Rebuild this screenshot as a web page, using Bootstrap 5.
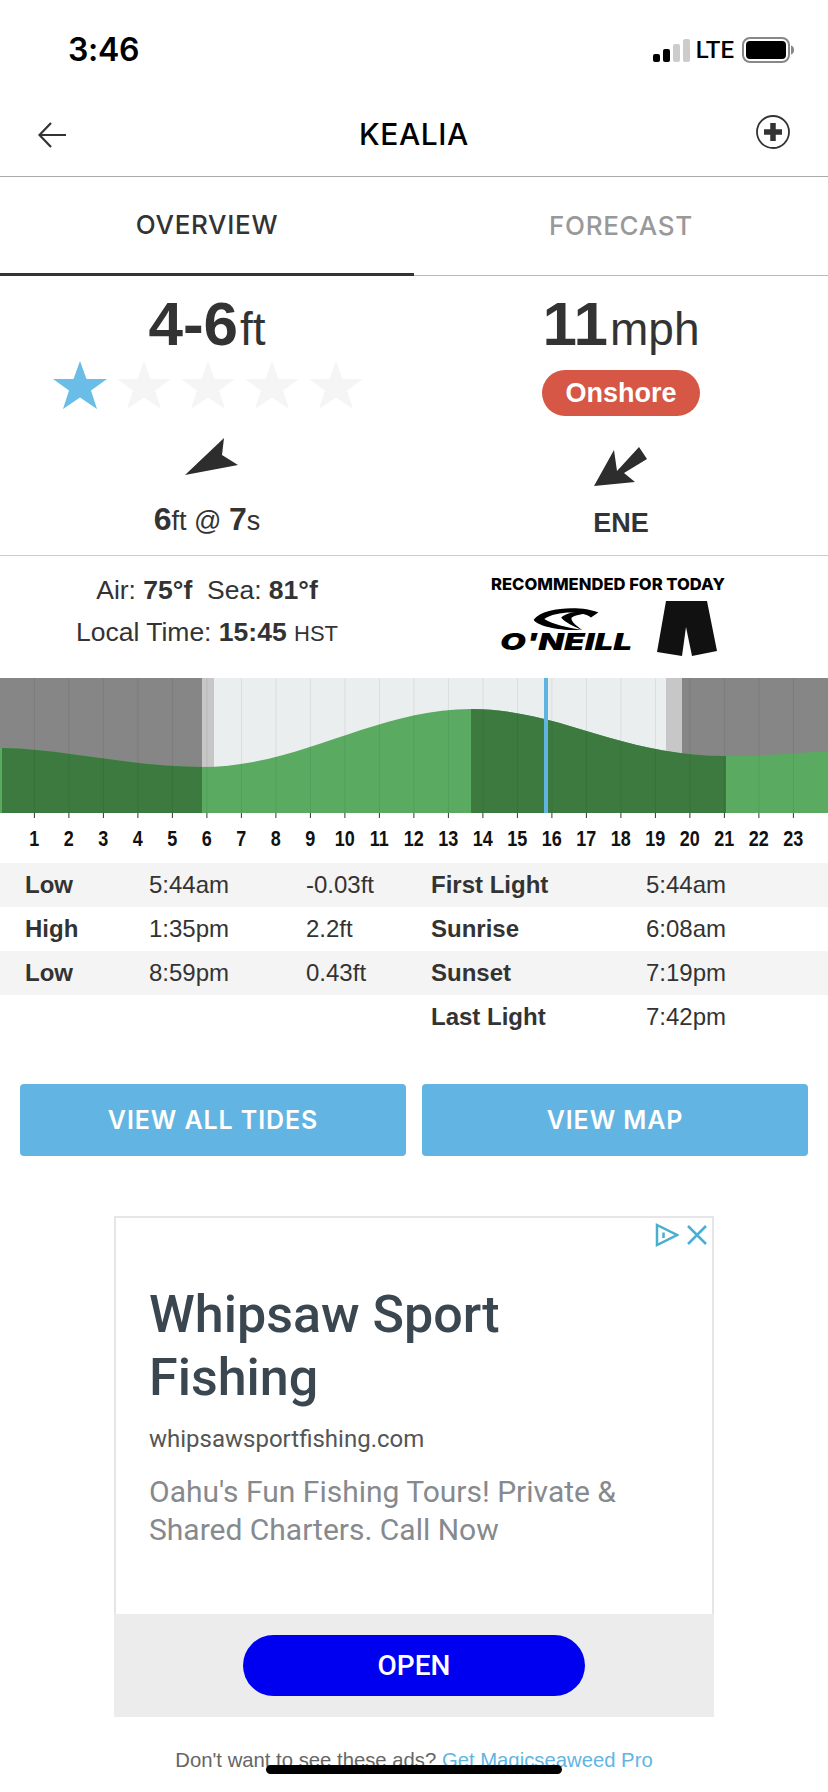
<!DOCTYPE html>
<html lang="en">
<head>
    <meta charset="UTF-8">
    <meta name="viewport" content="width=device-width, initial-scale=1.0">
    <title>Kealia</title>
    <link href="https://cdn.jsdelivr.net/npm/bootstrap@5.3.0/dist/css/bootstrap.min.css" rel="stylesheet">
    <style>
        body {
            margin: 0;
            background: #fff;
            color: #333;
            font-family: "Liberation Sans", Arial, sans-serif;
        }

        .phone {
            position: relative;
            width: 828px;
            height: 1792px;
            overflow: hidden;
        }

        .status-row {
            height: 98px;
            padding: 2px 34px 0 68px;
        }

        .clock {
            font: 600 32px/1 Inter, sans-serif;
            color: #000;
            letter-spacing: -.3px;
        }

        .lte {
            font: 500 24px/1 "Roboto", sans-serif;
            color: #000;
            margin: 0 8px 0 6px;
        }

        .top-nav {
            height: 79px;
            border-bottom: 1px solid #aaa;
            padding: 0 38px 6px;
        }

        .top-nav h1 {
            font: 500 30px/1 Inter, sans-serif;
            letter-spacing: .6px;
            color: #000;
            margin: 0;
        }

        .back-arrow {
            margin: 2px 6px 0 0;
        }

        .view-tabs {
            height: 99px;
            border-bottom: 1px solid #bbb;
        }

        .view-tab {
            width: 50%;
            font: 500 26px/1 Inter, sans-serif;
            letter-spacing: .7px;
            color: #333;
            text-decoration: none;
        }

        .view-tab.on {
            border-bottom: 3px solid #333;
            margin-bottom: -1px;
        }

        .view-tab.off {
            color: #999;
        }

        .summary {
            height: 280px;
            border-bottom: 1px solid #ccc;
        }

        .big-num {
            font-size: 62px;
            font-weight: 700;
            line-height: 60px;
            margin-top: 18px;
            white-space: nowrap;
        }

        .big-num span {
            font-size: 46px;
            font-weight: 400;
            margin-left: 2px;
        }

        .star-row {
            margin-top: 2px;
            padding-left: 53px;
            gap: 10px;
        }

        .pill-onshore {
            width: 158px;
            height: 46px;
            margin-top: 11px;
            border-radius: 23px;
            background: #d65745;
            color: #fff;
            font-size: 27px;
            font-weight: 700;
            line-height: 46px;
        }

        .swell-arrow {
            margin-top: 29px;
        }

        .wind-arrow {
            margin-top: 30px;
        }

        .swell {
            font-size: 27px;
            line-height: 36px;
            margin-top: 26px;
        }

        .swell b {
            font-size: 32px;
        }

        .wind-dir {
            font-size: 27px;
            font-weight: 700;
            line-height: 30px;
            margin-top: 22px;
        }

        .conditions {
            height: 122px;
        }

        .temps {
            font-size: 26.500px;
            line-height: 42px;
            padding-top: 13px;
        }

        .temps small {
            font-size: 22px;
        }

        .rec-wrap {
            padding: 19px 26px 0 0;
        }

        .rec-title {
            font: 800 16.600px/18px Inter, sans-serif;
            color: #000;
            white-space: nowrap;
        }

        .rec-row {
            margin-top: 8px;
            gap: 25px;
        }

        .brand-block {
            width: 132px;
            padding-top: 7px;
        }

        .brand-word {
            display: block;
            width: 93px;
            margin-top: 3px;
            font: italic 900 23.500px/18px Inter, sans-serif;
            color: #000;
            white-space: nowrap;
            transform: scaleX(1.42);
            transform-origin: left center;
        }

        .tide-chart {
            display: block;
        }

        .hour-labels {
            height: 45px;
            padding-left: 17px;
            color: #111;
            font-size: 18px;
            font-weight: 700;
            line-height: 43px;
        }

        .hour-labels span {
            width: 34.5px;
            text-align: center;
            transform: scaleY(1.2);
        }

        .tide-table {
            --bs-table-striped-bg: #f4f4f4;
            --bs-table-striped-color: #333;
            --bs-table-color: #333;
            font-size: 24px;
            line-height: 44px;
            table-layout: fixed;
            margin-bottom: 45px;
        }

        .tide-table td {
            padding: 0;
            height: 44px;
            color: #333;
        }

        .tide-table td:first-child {
            padding-left: 25px;
        }

        .btn-pair {
            padding: 0 20px;
        }

        .tide-btn {
            width: 386px;
            height: 72px;
            border: 0;
            border-radius: 4px;
            background: #62b5e3;
            color: #fff;
            font: 600 25px/72px Inter, sans-serif;
            letter-spacing: .9px;
            padding: 0;
        }

        .ad-box {
            position: relative;
            width: 600px;
            height: 501px;
            margin: 60px auto 0;
            border: 2px solid #e6e6e6;
            font-family: Roboto, sans-serif;
        }

        .ad-choice {
            position: absolute;
            top: 5px;
            right: 5px;
        }

        .ad-body {
            height: 396px;
            padding: 65px 30px 0 33px;
        }

        .ad-body h2 {
            font: 500 52px/63px Roboto, sans-serif;
            color: #3a4750;
            margin: 0;
            max-width: 420px;
        }

        .ad-url {
            font-size: 24px;
            line-height: 30px;
            color: #555;
            margin-top: 15px;
        }

        .ad-desc {
            font-size: 30px;
            line-height: 38px;
            color: #868a8e;
            margin-top: 19px;
        }

        .ad-foot {
            height: 103px;
            background: #ececec;
            margin: 0 -2px -2px;
        }

        .ad-open {
            width: 342px;
            height: 61px;
            border: 0;
            border-radius: 31px;
            background: #0000f0;
            color: #fff;
            font: 500 28px/61px Roboto, sans-serif;
            padding: 0;
        }

        .ad-note {
            font-size: 20.300px;
            line-height: 26px;
            color: #666;
            margin-top: 30px;
        }

        .ad-note a {
            color: #62b5e3;
            text-decoration: none;
        }

        .home-bar {
            position: absolute;
            left: 266px;
            bottom: 18px;
            width: 296px;
            height: 9px;
            border-radius: 5px;
            background: #000;
        }
    </style>
</head>
<body>
    <div class="phone">
        <div class="status-row d-flex align-items-center justify-content-between">
            <span class="clock">3:46</span>
            <div class="d-flex align-items-center">
                <svg width="37" height="23" viewBox="0 0 37 23">
                    <rect x="0" y="15" width="7" height="8" rx="2" fill="#000"/>
                    <rect x="10" y="10" width="7" height="13" rx="2" fill="#000"/>
                    <rect x="20" y="5" width="7" height="18" rx="2" fill="#ccc"/>
                    <rect x="30" y="0" width="7" height="23" rx="2" fill="#ccc"/>
                </svg>
                <span class="lte">LTE</span>
                <svg width="52" height="26" viewBox="0 0 52 26">
                    <rect x="1" y="1" width="46" height="24" rx="7" fill="none" stroke="#888" stroke-width="2"/>
                    <rect x="4" y="4" width="40" height="18" rx="4" fill="#000"/>
                    <path d="M49 8.500c2.500 .5 3 2.500 3 4.500s-.5 4-3 4.500z" fill="#888"/>
                </svg>
            </div>
        </div>

        <div class="top-nav d-flex align-items-center justify-content-between">
            <svg class="back-arrow" width="28" height="26" viewBox="0 0 28 26">
                <path d="M28 13H2M13 1 1.500 13 13 25" fill="none" stroke="#333" stroke-width="2.200"/>
            </svg>
            <h1>KEALIA</h1>
            <svg class="mb-1" width="34" height="34" viewBox="0 0 34 34">
                <circle cx="17" cy="17" r="16" fill="#fff" stroke="#333" stroke-width="1.800"/>
                <path d="M17 8v18M8 17h18" stroke="#333" stroke-width="5.500"/>
            </svg>
        </div>

        <div class="view-tabs d-flex">
            <a class="view-tab on d-flex align-items-center justify-content-center" href="#">OVERVIEW</a>
            <a class="view-tab off d-flex align-items-center justify-content-center" href="#">FORECAST</a>
        </div>

        <svg width="0" height="0" class="position-absolute">
            <symbol id="starShape" viewBox="0 0 54 48">
                <path d="M27 0 33.500 18H54L38 29.500 44 48 27 36.500 10 48 16 29.500 0 18H20.500z"/>
            </symbol>
        </svg>

        <div class="summary row g-0">
            <div class="col-6 text-center">
                <div class="big-num">4-6<span>ft</span></div>
                <div class="star-row d-flex">
                    <svg width="54" height="48" fill="#6abde6"><use href="#starShape"/></svg>
                    <svg width="54" height="48" fill="#f5f5f5"><use href="#starShape"/></svg>
                    <svg width="54" height="48" fill="#f5f5f5"><use href="#starShape"/></svg>
                    <svg width="54" height="48" fill="#f5f5f5"><use href="#starShape"/></svg>
                    <svg width="54" height="48" fill="#f5f5f5"><use href="#starShape"/></svg>
                </div>
                <svg class="d-block mx-auto swell-arrow" width="64" height="37" viewBox="0 0 64 37">
                    <path d="M10 37 49 0 47 17 63 27z" fill="#2d2d2d"/>
                </svg>
                <div class="swell"><b>6</b>ft @ <b>7</b>s</div>
            </div>
            <div class="col-6 text-center">
                <div class="big-num">11<span>mph</span></div>
                <div class="pill-onshore mx-auto">Onshore</div>
                <svg class="d-block mx-auto wind-arrow" width="54" height="40" viewBox="0 0 54 40">
                    <path d="M0 40 20 4 23 25 45 1 53 13 30 27 41 36z" fill="#2d2d2d"/>
                </svg>
                <div class="wind-dir">ENE</div>
            </div>
        </div>

        <div class="conditions row g-0">
            <div class="col-6 text-center temps">
                <div>Air: <b>75°f</b>&nbsp; Sea: <b>81°f</b></div>
                <div>Local Time: <b>15:45</b> <small>HST</small></div>
            </div>
            <div class="col-6 text-center rec-wrap">
                <div class="rec-title">RECOMMENDED FOR TODAY</div>
                <div class="rec-row d-flex justify-content-center">
                    <div class="brand-block">
                        <svg class="d-block mx-auto" width="68" height="22" viewBox="195 136 200 68">
                            <path d="M395 150C345 128 225 132 195 172 205 192 280 207 345 204 300 196 250 186 228 170 260 146 345 142 372 165Z" fill="#000"/>
                            <path d="M395 150C370 140 300 145 280 165 290 180 320 192 345 204 325 188 310 178 312 166 325 155 365 152 395 150Z" fill="#000"/>
                        </svg>
                        <span class="brand-word">O'NEILL</span>
                    </div>
                    <svg width="60" height="56" viewBox="0 0 60 56">
                        <path d="M9 0H50L60 50 35 55 29 26 25 55 0 51Z" fill="#111"/>
                    </svg>
                </div>
            </div>
        </div>

        <svg class="tide-chart" width="828" height="140" viewBox="0 0 828 140">
            <defs>
                <clipPath id="nightTide"><rect x="2" y="0" width="200" height="135"/><rect x="471" y="0" width="255" height="135"/></clipPath>
            </defs>
            <rect width="202" height="135" fill="#868686"/>
            <rect x="202" width="12" height="135" fill="#c7c7c7"/>
            <rect x="214" width="452" height="135" fill="#ebeeef"/>
            <rect x="666" width="16" height="135" fill="#c7c7c7"/>
            <rect x="682" width="146" height="135" fill="#868686"/>
            <path d="M0 70C60 70 130 89 202 89 300 89 375 31 471 31 560 31 620 78 726 78 760 78 800 75 828 73V135H0Z" fill="#5aaa62"/>
            <path d="M0 70C60 70 130 89 202 89 300 89 375 31 471 31 560 31 620 78 726 78 760 78 800 75 828 73V135H0Z" fill="#3c7a3f" clip-path="url(#nightTide)"/>
            <path d="M34.400 0V135M68.900 0V135M103.400 0V135M137.900 0V135M172.400 0V135M206.900 0V135M241.400 0V135M275.900 0V135M310.400 0V135M344.900 0V135M379.400 0V135M413.900 0V135M448.400 0V135M482.900 0V135M517.400 0V135M551.900 0V135M586.400 0V135M620.900 0V135M655.400 0V135M689.900 0V135M724.400 0V135M758.900 0V135M793.400 0V135" stroke="#000" stroke-opacity=".07"/>
            <path d="M34.400 135V140M68.900 135V140M103.400 135V140M137.900 135V140M172.400 135V140M206.900 135V140M241.400 135V140M275.900 135V140M310.400 135V140M344.900 135V140M379.400 135V140M413.900 135V140M448.400 135V140M482.900 135V140M517.400 135V140M551.900 135V140M586.400 135V140M620.900 135V140M655.400 135V140M689.900 135V140M724.400 135V140M758.900 135V140M793.400 135V140" stroke="#333"/>
            <rect x="544" width="4" height="135" fill="#5fb4e0"/>
        </svg>

        <div class="hour-labels d-flex">
            <span>1</span><span>2</span><span>3</span><span>4</span><span>5</span><span>6</span><span>7</span><span>8</span><span>9</span><span>10</span><span>11</span><span>12</span><span>13</span><span>14</span><span>15</span><span>16</span><span>17</span><span>18</span><span>19</span><span>20</span><span>21</span><span>22</span><span>23</span>
        </div>

        <table class="table table-borderless table-striped tide-table">
            <colgroup>
                <col style="width:149px"><col style="width:157px"><col style="width:125px"><col style="width:215px"><col>
            </colgroup>
            <tbody>
                <tr><td><b>Low</b></td><td>5:44am</td><td>-0.03ft</td><td><b>First Light</b></td><td>5:44am</td></tr>
                <tr><td><b>High</b></td><td>1:35pm</td><td>2.2ft</td><td><b>Sunrise</b></td><td>6:08am</td></tr>
                <tr><td><b>Low</b></td><td>8:59pm</td><td>0.43ft</td><td><b>Sunset</b></td><td>7:19pm</td></tr>
                <tr><td></td><td></td><td></td><td><b>Last Light</b></td><td>7:42pm</td></tr>
            </tbody>
        </table>

        <div class="btn-pair d-flex justify-content-between">
            <button type="button" class="btn tide-btn">VIEW ALL TIDES</button>
            <button type="button" class="btn tide-btn">VIEW MAP</button>
        </div>

        <div class="ad-box">
            <div class="ad-choice d-flex align-items-center gap-2">
                <svg width="24" height="24" viewBox="0 0 24 24">
                    <path d="M2 2 22 12 2 22ZM8.500 9.500V15" fill="none" stroke="#4aaed0" stroke-width="2.500"/>
                </svg>
                <svg width="20" height="20" viewBox="0 0 20 20">
                    <path d="M1 1 19 19M19 1 1 19" stroke="#4aaed0" stroke-width="2.500"/>
                </svg>
            </div>
            <div class="ad-body">
                <h2>Whipsaw Sport Fishing</h2>
                <div class="ad-url">whipsawsportfishing.com</div>
                <div class="ad-desc">Oahu's Fun Fishing Tours! Private &amp; Shared Charters. Call Now</div>
            </div>
            <div class="ad-foot d-flex align-items-center justify-content-center">
                <button type="button" class="btn ad-open">OPEN</button>
            </div>
        </div>

        <div class="ad-note text-center">Don't want to see these ads? <a href="#">Get Magicseaweed Pro</a></div>
        <div class="home-bar"></div>
    </div>

    <script src="https://cdn.jsdelivr.net/npm/bootstrap@5.3.0/dist/js/bootstrap.bundle.min.js"></script>
</body>
</html>
